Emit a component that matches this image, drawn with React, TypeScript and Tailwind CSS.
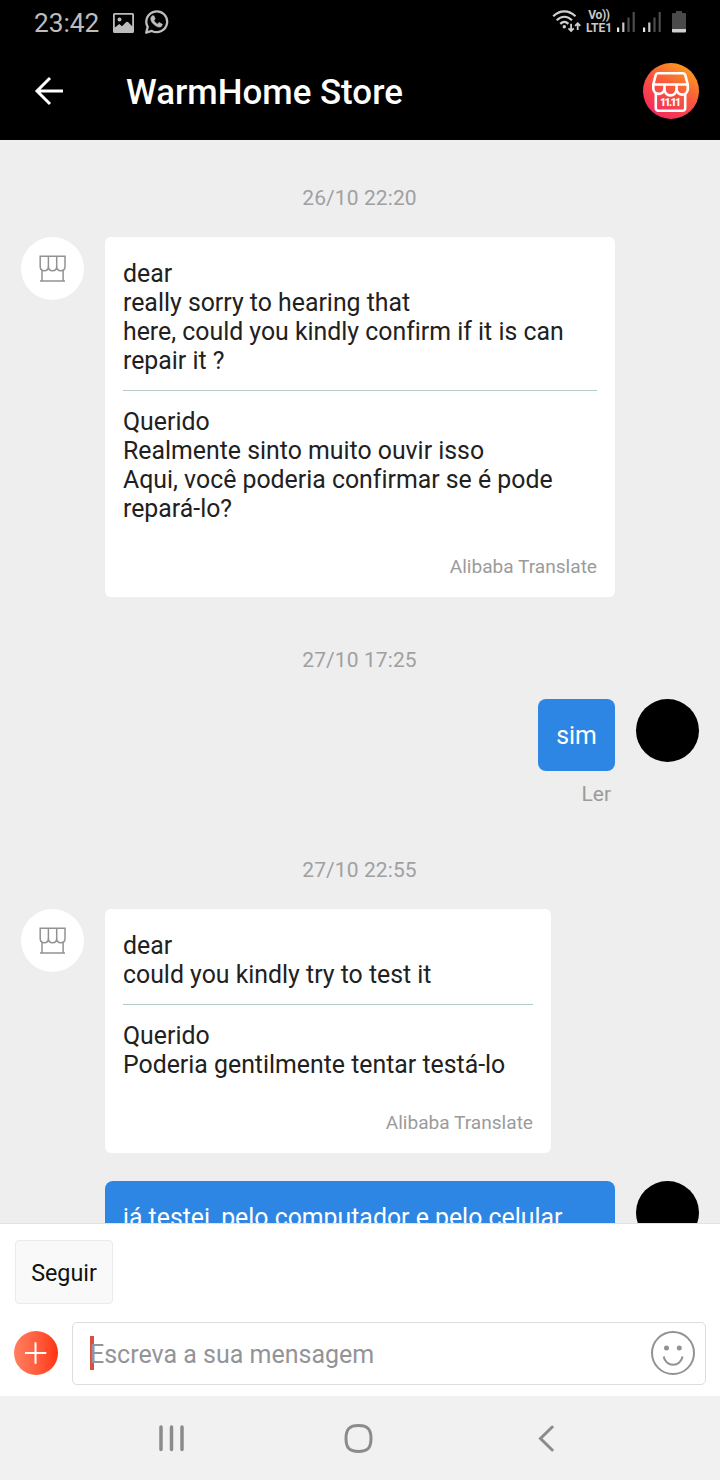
import React from 'react';

interface TranslatedProps {
  original: string[];
  translated: string[];
  width: string;
}

const ImageIcon = () => (
  <svg className="w-[21px] h-[20px]" viewBox="0 0 21 20">
    <path
      fill="#bdbdbd"
      fillRule="evenodd"
      d="M1.500 0h18A1.500 1.500 0 0 1 21 1.500v17a1.500 1.500 0 0 1-1.500 1.500h-18A1.500 1.500 0 0 1 0 18.500v-17A1.500 1.500 0 0 1 1.500 0ZM1.800 1.800v12.700l4.500-3.500 2.700 2.200 4.500-4.400 1.500.3 4.200 4.200V1.800ZM6.500 4.500a2 2 0 1 1 0 4 2 2 0 0 1 0-4Z"
    />
  </svg>
);

const WhatsAppIcon = () => (
  <svg className="w-[25px] h-[26px]" viewBox="0 0 25 26" fill="none">
    <path
      d="M2.200 23.700 3.700 17.900A10.400 10.400 0 1 1 7.800 21.900Z"
      stroke="#bdbdbd"
      strokeWidth="2.300"
      strokeLinejoin="round"
    />
    <path
      d="M8.300 6.800 6.900 8.500c-.6 2.500.7 4.900 3.200 7.100 2.700 2.400 5.400 3.300 7.500 1.600l.8-1.900-3.200-1.900-1.700 1.500c-1.600-.7-2.900-1.900-3.500-3.500l1.200-1.600-1.300-3Z"
      fill="#bdbdbd"
      stroke="#bdbdbd"
      strokeWidth=".6"
    />
  </svg>
);

const WifiIcon = () => (
  <svg className="w-[30px] h-[24px]" viewBox="0 0 30 24" fill="none" stroke="#d0d0d0" strokeWidth="2.200">
    <path d="M1.200 6.300C8-.3 16.700-.3 23.500 6.300" />
    <path d="M4.700 10.300c4.700-4.700 10.600-4.700 15.300 0" />
    <path d="M8.300 13.900c2.700-2.700 5.400-2.700 8.100 0" />
    <circle cx="12.300" cy="16.800" r="1.700" fill="#d0d0d0" stroke="none" />
    <path d="M19.100 13.700v7M16.500 18.300l2.600 2.700 2.600-2.700M25.700 20v-6.500M23.100 15.900l2.600-2.700 2.600 2.700" strokeWidth="1.800" />
  </svg>
);

const SignalIcon = () => (
  <svg className="w-[18px] h-[20px]" viewBox="0 0 18 20">
    <path d="M0 15.500h2.200V20H0z" fill="#e8e8e8" />
    <path d="M5.200 10.500h2.200V20H5.200z" fill="#c8c8c8" />
    <path d="M10.400 5.500h2.200V20h-2.200zM15.600 0h2.200v20h-2.200z" fill="#4c4c4c" />
  </svg>
);

const BatteryIcon = () => (
  <svg className="w-[14px] h-[22px]" viewBox="0 0 14 22">
    <path d="M4 0h6v2h3a1 1 0 0 1 1 1V18H0V3a1 1 0 0 1 1-1h3Z" fill="#4a4a4a" />
    <path d="M0 18h14v2.500a1 1 0 0 1-1 1H1a1 1 0 0 1-1-1Z" fill="#d0d0d0" />
  </svg>
);

const StoreBadge = () => (
  <svg className="w-14 h-14" viewBox="0 0 56 56">
    <defs>
      <linearGradient id="badge" x1="0.150" y1="0.850" x2="0.650" y2="0.050">
        <stop offset="0" stopColor="#f52d5c" />
        <stop offset="0.550" stopColor="#f9563e" />
        <stop offset="1" stopColor="#fb9222" />
      </linearGradient>
    </defs>
    <circle cx="28" cy="28" r="28" fill="url(#badge)" />
    <g fill="none" stroke="#fff" strokeWidth="2.600" strokeLinejoin="round">
      <path d="M15 10.200h25a2.200 2.200 0 0 1 2.200 1.600L44.800 21.500v4.200a5.600 5.600 0 0 1-11.200.6 6 6 0 0 1-12.200 0A5.600 5.600 0 0 1 10.300 25.700v-4.200L12.800 11.800A2.200 2.200 0 0 1 15 10.200Z" />
      <path d="M10.500 21.500h34.300M21.500 21.500v5M33.600 21.500v5M12.800 30.500v14.700a2.600 2.600 0 0 0 2.600 2.600h24.200a2.600 2.600 0 0 0 2.600-2.600V30.500" />
    </g>
    <text x="27.500" y="42.800" textAnchor="middle" textLength="21" fill="#fff" className="font-['Roboto',sans-serif] text-[10.500px] font-black">
      11.11
    </text>
  </svg>
);

const ShopAvatar = () => (
  <div className="flex h-[63px] w-[63px] shrink-0 items-center justify-center rounded-full bg-white">
    <svg className="w-[28px] h-[28px]" viewBox="0 0 28 28" fill="none" stroke="#929292" strokeWidth="1.500">
      <path d="M1.200 1.200h24.800V11.500c0 2.500-1.500 4.200-4.100 4.200S17.700 14 17.700 11.500c0 2.500-1.500 4.200-4.100 4.200S9.400 14 9.400 11.500c0 2.500-1.500 4.200-4.100 4.200S1.200 14 1.200 11.500Z" />
      <path d="M9.400 1.200V12M17.700 1.200V12M3 15v10.500M24.100 15v10.500M1 26h25" />
    </svg>
  </div>
);

const UserAvatar = () => <div className="h-[63px] w-[63px] shrink-0 rounded-full bg-black" />;

const Timestamp = ({ children }: { children: React.ReactNode }) => (
  <div className="pr-px text-center text-[21px] leading-[24px] tracking-[0.1px] text-[#a0a0a3]">{children}</div>
);

const TranslatedMessage: React.FC<TranslatedProps> = ({ original, translated, width }) => (
  <div className="flex items-start gap-[21px] pl-[21px]">
    <ShopAvatar />
    <div className={`rounded-md bg-white px-[18px] pt-[22px] pb-[19px] text-[24.850px] leading-[29px] text-[#212121] ${width}`}>
      {original.map((line) => (
        <p key={line} className="whitespace-nowrap">{line}</p>
      ))}
      <div className="mt-[15px] mb-[16px] h-px bg-[#b3cdc6]" />
      {translated.map((line) => (
        <p key={line} className="whitespace-nowrap">{line}</p>
      ))}
      <p className="mt-[32px] text-right text-[19.100px] leading-[23px] text-[#9b9b9b]">Alibaba Translate</p>
    </div>
  </div>
);

export default function App() {
  return (
    <div className="flex h-[1480px] w-[720px] flex-col overflow-hidden bg-[#eeeeee] font-['Roboto',sans-serif] [font-variant-ligatures:none]">
      {/* Status bar */}
      <div className="flex h-[44px] shrink-0 items-center bg-black pl-[34px] pr-[34px]">
        <span className="w-[79px] pt-0.5 text-[26.250px] leading-none text-[#bdbdbd]">23:42</span>
        <div className="pt-0.5"><ImageIcon /></div>
        <div className="ml-[10px]"><WhatsAppIcon /></div>
        <div className="ml-auto flex items-center">
          <WifiIcon />
          <div className="ml-[3px] mr-[4px] w-[28px] whitespace-nowrap text-center text-[12px] font-bold leading-[13px] text-[#c8c8c8]">
            <p className="tracking-[-0.300px]">Vo))</p>
            <p>LTE1</p>
          </div>
          <SignalIcon />
          <div className="ml-[8px] mr-[11px]"><SignalIcon /></div>
          <BatteryIcon />
        </div>
      </div>

      {/* Header */}
      <header className="flex h-24 shrink-0 items-center bg-black pb-0.5 pl-[34px] pr-[21px]">
        <svg className="w-[30px] h-[30px]" viewBox="0 0 30 30" fill="none" stroke="#fff" strokeWidth="3">
          <path d="M29 15H3M16 2 3 15l13 13" />
        </svg>
        <h1 className="ml-[62px] pt-1 text-[34.900px] font-medium leading-none text-white">WarmHome Store</h1>
        <div className="ml-auto"><StoreBadge /></div>
      </header>

      {/* Conversation */}
      <main className="min-h-0 flex-1 overflow-hidden pt-[46px]">
        <Timestamp>26/10 22:20</Timestamp>
        <div className="mt-[27px] mb-[51px]">
          <TranslatedMessage
            width="w-[510px]"
            original={['dear', 'really sorry to hearing that', 'here, could you kindly confirm if it is can', 'repair it ?']}
            translated={['Querido', 'Realmente sinto muito ouvir isso', 'Aqui, você poderia confirmar se é pode', 'repará-lo?']}
          />
        </div>
        <Timestamp>27/10 17:25</Timestamp>
        <div className="mt-[27px] flex items-start justify-end gap-[21px] pr-[21px]">
          <div className="flex flex-col items-end">
            <div className="h-[72px] w-[77px] rounded-lg bg-[#2d86e3] pt-[22px] text-center text-[24.850px] leading-[29px] text-white">sim</div>
            <span className="mt-[11px] mr-1 text-[21px] leading-[24px] text-[#9b9b9b]">Ler</span>
          </div>
          <UserAvatar />
        </div>
        <div className="mt-[52px]"><Timestamp>27/10 22:55</Timestamp></div>
        <div className="mt-[27px]">
          <TranslatedMessage
            width="w-[446px]"
            original={['dear', 'could you kindly try to test it']}
            translated={['Querido', 'Poderia gentilmente tentar testá-lo']}
          />
        </div>
        <div className="mt-[28px] flex items-start justify-end gap-[21px] pr-[21px]">
          <div className="h-[102px] w-[510px] rounded-lg bg-[#2d86e3] px-[18px] pt-[22px] text-[24.850px] leading-[29px] text-white">
            já testei, pelo computador e pelo celular
          </div>
          <UserAvatar />
        </div>
      </main>

      {/* Composer */}
      <footer className="h-[173px] shrink-0 border-t border-[#e2e2e2] bg-white px-[14px] pt-[16px]">
        <button className="ml-px flex h-[64px] w-[98px] items-center justify-center rounded border border-[#ebebeb] bg-[#f9f9f9] pt-[3px] text-[23.300px] text-[#111]">
          Seguir
        </button>
        <div className="mt-[18px] flex items-center">
          <div className="mb-0.5 flex h-[44px] w-[44px] items-center justify-center rounded-full bg-linear-to-r from-[#ff7e60] to-[#ff3208]">
            <svg className="w-[22px] h-[22px]" viewBox="0 0 22 22" stroke="#fff" strokeWidth="2" strokeLinecap="round">
              <path d="M10.500 1v20M.500 11h20" />
            </svg>
          </div>
          <div className="ml-[14px] flex h-[63px] flex-1 items-center rounded-[5px] border border-[#dcdddf] pl-[17px] pr-[10px]">
            <div className="mb-0.5 h-[34px] w-[4px] bg-[#d84f43]" />
            <span className="-ml-[4px] pt-[3px] text-[25px] text-[#929497]">Escreva a sua mensagem</span>
            <svg className="mb-0.5 ml-auto w-[44px] h-[44px]" viewBox="0 0 44 44" fill="none" stroke="#929292" strokeWidth="2">
              <circle cx="22" cy="22" r="21" />
              <circle cx="15.500" cy="17" r="2.500" fill="#929292" stroke="none" />
              <circle cx="28.300" cy="17" r="2.500" fill="#929292" stroke="none" />
              <path d="M12.700 25.500c.8 5 4.700 8.300 9.400 8.300s8.600-3.300 9.400-8.300" />
            </svg>
          </div>
        </div>
      </footer>

      {/* System navigation */}
      <nav className="flex h-[84px] shrink-0 items-center bg-[#f1f1f1] pl-[158px]">
        <svg className="w-[27px] h-[28px]" viewBox="0 0 27 28" stroke="#8b8b8b" strokeWidth="3.500" strokeLinecap="round">
          <path d="M3 3v22.500M13.500 3v22.500M24 3v22.500" />
        </svg>
        <svg className="ml-[158px] w-[30px] h-[30px]" viewBox="0 0 30 30" fill="none" stroke="#8b8b8b" strokeWidth="3">
          <path d="M15.500 2.500C24.500 2.500 28 6 28 15.500s-3.500 13-12.500 13-12.500-3.500-12.500-13 3.500-13 12.500-13Z" />
        </svg>
        <svg className="ml-[165px] w-[17px] h-[28px]" viewBox="0 0 17 28" fill="none" stroke="#8b8b8b" strokeWidth="3" strokeLinecap="round">
          <path d="M14.200 3 2.500 14.500l11.700 11.500" />
        </svg>
      </nav>
    </div>
  );
}
